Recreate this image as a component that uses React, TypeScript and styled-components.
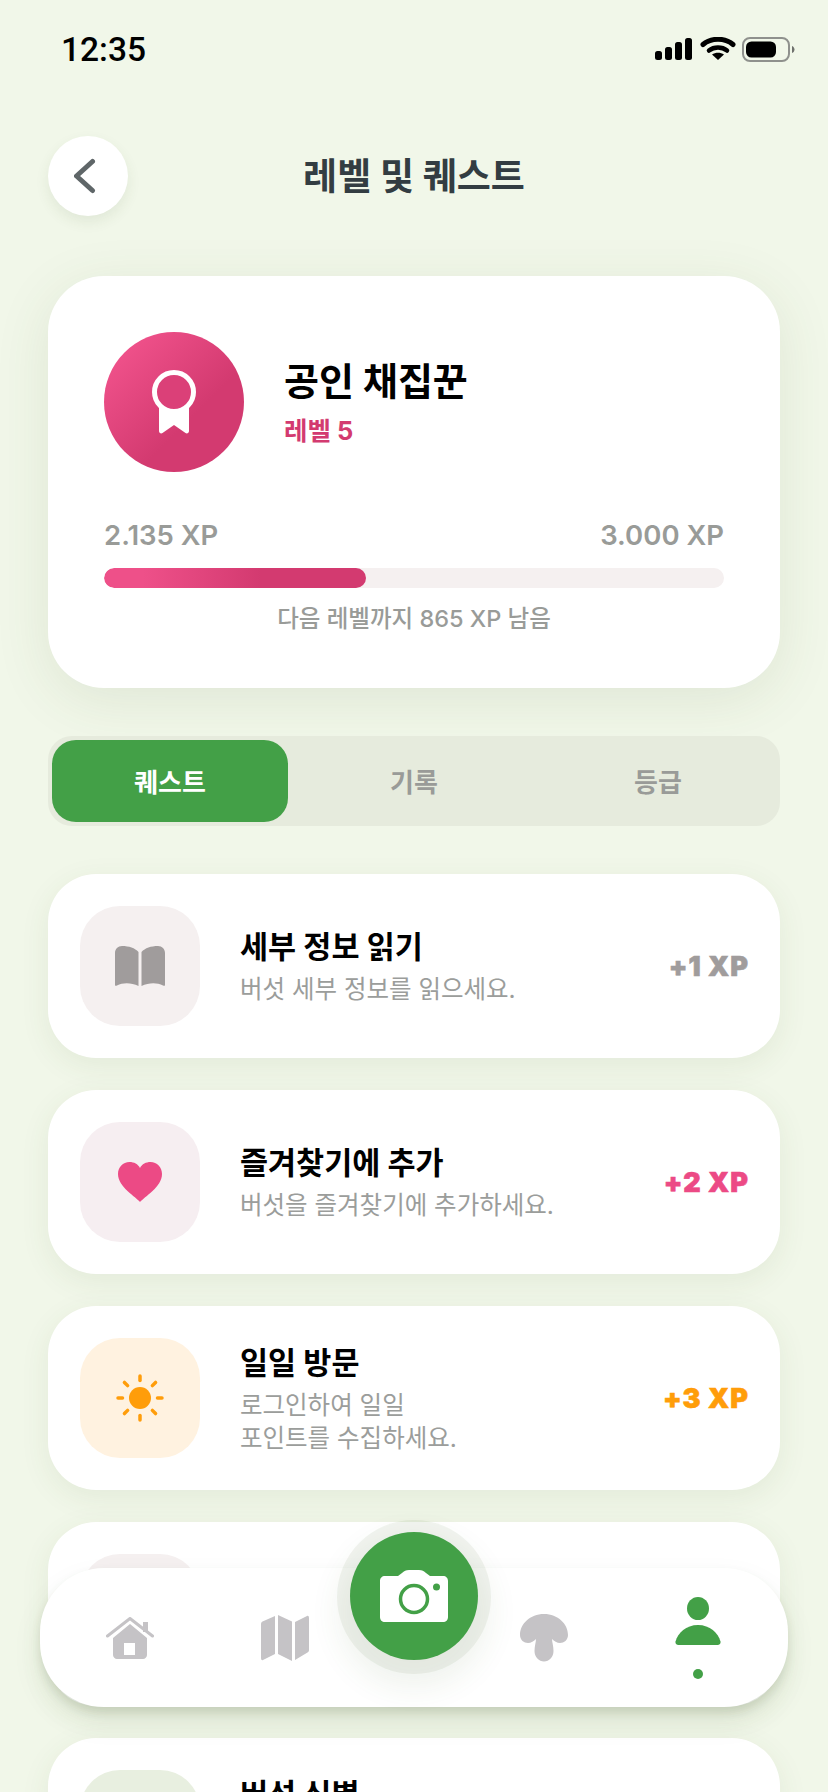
import * as React from "react";
import styled, { createGlobalStyle } from "styled-components";

const GlobalStyle = createGlobalStyle`
  html, body {
    margin: 0;
    padding: 0;
    background: #f1f7e9;
  }
  * { box-sizing: border-box; }
`;

const Screen = styled.div`
  position: relative;
  width: 828px;
  height: 1792px;
  overflow: hidden;
  background: #f1f7e9;
  font-family: "Inter", "Noto Sans CJK KR", sans-serif;
  color: #000;
`;

const StatusBar = styled.div`
  height: 136px;
  padding: 34px 32px 0 61px;
  display: flex;
  justify-content: space-between;
  align-items: flex-start;
`;

const Clock = styled.span`
  font-family: "Roboto", "Liberation Sans", sans-serif;
  font-size: 33.5px;
  line-height: 32px;
  font-weight: 500;
  margin-top: 0;
`;

const StatusIcons = styled.svg`
  display: block;
  margin-top: 3px;
`;

const Header = styled.header`
  position: relative;
  height: 80px;
  margin: 0 48px 60px;
  display: flex;
  align-items: center;
  justify-content: center;
`;

const BackButton = styled.button`
  position: absolute;
  left: 0;
  top: 0;
  width: 80px;
  height: 80px;
  border: 0;
  padding: 0;
  border-radius: 50%;
  background: #fff;
  display: flex;
  align-items: center;
  justify-content: center;
  box-shadow: 0 6px 14px rgba(70, 90, 40, 0.09);
`;

const Title = styled.h1`
  margin: -4px 0 0;
  font-size: 37px;
  font-weight: 700;
  color: #333d42;
`;

const LevelCard = styled.section`
  margin: 0 48px;
  height: 412px;
  padding: 56px 56px 0;
  background: #fff;
  border-radius: 56px;
  box-shadow: 0 12px 56px rgba(70, 90, 40, 0.1);
`;

const LevelHead = styled.div`
  display: flex;
  align-items: center;
  gap: 40px;
`;

const Badge = styled.div`
  width: 140px;
  height: 140px;
  border-radius: 50%;
  background: linear-gradient(135deg, #ee5089 15%, #d33a70 62%);
  display: flex;
  align-items: center;
  justify-content: center;
`;

const LevelName = styled.div`
  font-size: 38px;
  line-height: 44px;
  font-weight: 700;
  margin-top: 1px;
`;

const LevelNumber = styled.div`
  font-size: 25.5px;
  line-height: 30px;
  font-weight: 700;
  color: #d33a70;
  margin-top: 13px;
`;

const XpRow = styled.div`
  display: flex;
  justify-content: space-between;
  margin-top: 46px;
  font-size: 27.5px;
  line-height: 34px;
  font-weight: 600;
  color: #999b98;
`;

const Track = styled.div`
  height: 20px;
  margin-top: 16px;
  border-radius: 10px;
  background: #f5f0f0;
  overflow: hidden;
`;

const Fill = styled.div`
  height: 100%;
  border-radius: 10px;
  background: linear-gradient(90deg, #ee5089 15%, #d33a70 60%);
`;

const Remaining = styled.div`
  margin-top: 14px;
  text-align: center;
  font-size: 23.5px;
  line-height: 34px;
  font-weight: 500;
  color: #999b98;
`;

const Tabs = styled.nav`
  margin: 48px 48px 48px;
  height: 90px;
  display: grid;
  grid-template-columns: repeat(3, 1fr);
  background: #e6ebdd;
  border-radius: 24px;
`;

const Tab = styled.div<{ $active?: boolean }>`
  margin: 4px;
  padding-bottom: 2px;
  display: flex;
  align-items: center;
  justify-content: center;
  border-radius: 24px;
  font-size: 26px;
  font-weight: 700;
  color: ${(p) => (p.$active ? "#fff" : "#999b98")};
  background: ${(p) => (p.$active ? "#43a047" : "transparent")};
`;

const QuestList = styled.div`
  margin: 0 48px;
  display: flex;
  flex-direction: column;
  gap: 32px;
`;

const QuestCard = styled.article`
  height: 184px;
  flex: none;
  padding: 32px 31px 32px 32px;
  display: flex;
  align-items: flex-start;
  background: #fff;
  border-radius: 48px;
  box-shadow: 0 8px 30px rgba(70, 90, 40, 0.08);
`;

const QuestIcon = styled.div<{ $bg: string }>`
  width: 120px;
  height: 120px;
  flex: none;
  border-radius: 40px;
  background: ${(p) => p.$bg};
  display: flex;
  align-items: center;
  justify-content: center;
`;

const QuestText = styled.div`
  flex: 1;
  margin-left: 40px;
  height: 120px;
  display: flex;
  flex-direction: column;
  justify-content: center;
`;

const QuestTitle = styled.div`
  font-size: 30.5px;
  line-height: 42px;
  font-weight: 700;
  margin-bottom: 5px;
`;

const QuestDesc = styled.div`
  font-size: 24.5px;
  line-height: 33px;
  color: #9b9d9b;
`;

const QuestXp = styled.div<{ $color: string }>`
  align-self: center;
  font-size: 27px;
  font-weight: 900;
  letter-spacing: 1px;
  white-space: nowrap;
  -webkit-text-stroke: 0.6px ${(p) => p.$color};
  color: ${(p) => p.$color};
`;

const BottomNav = styled.nav`
  position: absolute;
  left: 40px;
  top: 1568px;
  width: 748px;
  height: 139px;
  padding-left: 12px;
  display: grid;
  grid-template-columns: 156px 154px 104px 156px 152px;
  align-items: center;
  background: #fff;
  border-radius: 64px;
  box-shadow: 0 6px 10px rgba(60, 85, 40, 0.13), 0 14px 30px rgba(60, 85, 40, 0.08);
`;

const NavItem = styled.div`
  display: flex;
  flex-direction: column;
  align-items: center;
  gap: 24px;
`;

const ActiveDot = styled.span`
  width: 10px;
  height: 10px;
  border-radius: 50%;
  background: #43a047;
`;

const CameraButton = styled.button`
  position: absolute;
  left: 310px;
  top: -36px;
  width: 128px;
  height: 128px;
  border: 0;
  padding: 0;
  border-radius: 50%;
  background: #43a047;
  display: flex;
  align-items: center;
  justify-content: center;
  box-shadow: 0 1px 0 13px rgba(70, 100, 40, 0.07), 0 16px 30px 12px rgba(70, 100, 40, 0.08);
`;

const BookIcon = () => (
  <svg width="50" height="40" viewBox="0 0 50 40">
    <path
      d="M23.5 6C20 2 14 0 7 0 3 0 0 3 0 7v32c0 1 1 1 2 .5C8 36.500 16 36.500 23.500 40Z"
      fill="#a09c9c"
    />
    <path
      d="M26.500 6C30 2 36 0 43 0c4 0 7 3 7 7v32c0 1-1 1-2 .5C42 36.500 34 36.500 26.500 40Z"
      fill="#a09c9c"
    />
  </svg>
);

const HeartIcon = () => (
  <svg width="44" height="40" viewBox="0 0 44 40">
    <path
      d="M22 40C18 35 0 25 0 12 0 5 5 0 11.500 0 16 0 20 2 22 6 24 2 28 0 32.500 0 39 0 44 5 44 12 44 25 26 35 22 40Z"
      fill="#ec4a85"
    />
  </svg>
);

const SunIcon = () => {
  const rays = [0, 45, 90, 135, 180, 225, 270, 315];
  return (
    <svg width="48" height="48" viewBox="-24 -24 48 48">
      <circle r="11" fill="#ff9d0a" />
      {rays.map((angle) => (
        <line
          key={angle}
          x1="0"
          y1="-17.500"
          x2="0"
          y2="-22"
          stroke="#ff9d0a"
          strokeWidth="3.500"
          strokeLinecap="round"
          transform={`rotate(${angle})`}
        />
      ))}
    </svg>
  );
};

type Quest = {
  id: string;
  title?: string;
  desc?: string[];
  xp?: string;
  color?: string;
  bg: string;
  icon?: React.ReactNode;
};

const QUESTS: Quest[] = [
  {
    id: "read",
    title: "세부 정보 읽기",
    desc: ["버섯 세부 정보를 읽으세요."],
    xp: "+1 XP",
    color: "#a09c9c",
    bg: "#f5f0f0",
    icon: <BookIcon />,
  },
  {
    id: "favorite",
    title: "즐겨찾기에 추가",
    desc: ["버섯을 즐겨찾기에 추가하세요."],
    xp: "+2 XP",
    color: "#ec4a85",
    bg: "#f6eef1",
    icon: <HeartIcon />,
  },
  {
    id: "daily",
    title: "일일 방문",
    desc: ["로그인하여 일일", "포인트를 수집하세요."],
    xp: "+3 XP",
    color: "#ff9d0a",
    bg: "#fff2e0",
    icon: <SunIcon />,
  },
  // sits behind the bottom nav, only the top of its icon box shows
  { id: "hidden", bg: "#f5f0f0" },
  {
    id: "identify",
    title: "버섯 식별",
    desc: ["새로운 버섯을", "식별하세요."],
    bg: "#e8efe0",
  },
];

const XP_PROGRESS = 42.2;

export default function App() {
  return (
    <Screen>
      <GlobalStyle />

      <StatusBar>
        <Clock>12:35</Clock>
        <StatusIcons width="141" height="28" viewBox="0 0 141 28">
          <rect x="0" y="14" width="7" height="9" rx="2.500" fill="#000" />
          <rect x="10" y="10" width="7" height="13" rx="2.500" fill="#000" />
          <rect x="20" y="5" width="7" height="18" rx="2.500" fill="#000" />
          <rect x="30" y="1" width="7" height="22" rx="2.500" fill="#000" />
          <path
            d="M48 7.500C56 .5 70 .5 78 7.500"
            fill="none"
            stroke="#000"
            strokeWidth="5"
            strokeLinecap="round"
          />
          <path
            d="M54 13.500C59 9.500 67 9.500 72 13.500"
            fill="none"
            stroke="#000"
            strokeWidth="4.500"
            strokeLinecap="round"
          />
          <path d="M63 23l-6-5.500c3.500-2.500 8.500-2.500 12 0Z" fill="#000" />
          <rect
            x="88"
            y="1"
            width="46"
            height="23"
            rx="7"
            fill="none"
            stroke="#8f918d"
            strokeWidth="2"
          />
          <rect x="91" y="4.500" width="30" height="16" rx="5.500" fill="#000" />
          <path d="M137 9v7c1.500-.5 2.500-2 2.500-3.500S138.500 9.500 137 9Z" fill="#6f716d" />
        </StatusIcons>
      </StatusBar>

      <Header>
        <BackButton aria-label="뒤로">
          <svg width="28" height="40" viewBox="0 0 28 40">
            <path
              d="M18.500 5.500 2.500 20l16 14.500"
              fill="none"
              stroke="#5f6668"
              strokeWidth="5"
              strokeLinecap="round"
              strokeLinejoin="round"
            />
          </svg>
        </BackButton>
        <Title>레벨 및 퀘스트</Title>
      </Header>

      <LevelCard>
        <LevelHead>
          <Badge>
            <svg width="44" height="64" viewBox="0 0 44 64">
              <path
                d="M7 36v25c0 2 2 3 3.500 2L22 55l11.500 8c1.500 1 3.500 0 3.500-2V36Z"
                fill="#fff"
              />
              <circle cx="22" cy="22" r="19.500" fill="#db4078" stroke="#fff" strokeWidth="5" />
            </svg>
          </Badge>
          <div>
            <LevelName>공인 채집꾼</LevelName>
            <LevelNumber>레벨 5</LevelNumber>
          </div>
        </LevelHead>
        <XpRow>
          <span>2.135 XP</span>
          <span>3.000 XP</span>
        </XpRow>
        <Track>
          <Fill style={{ width: `${XP_PROGRESS}%` }} />
        </Track>
        <Remaining>다음 레벨까지 865 XP 남음</Remaining>
      </LevelCard>

      <Tabs>
        <Tab $active>퀘스트</Tab>
        <Tab>기록</Tab>
        <Tab>등급</Tab>
      </Tabs>

      <QuestList>
        {QUESTS.map((quest) => (
          <QuestCard key={quest.id}>
            <QuestIcon $bg={quest.bg}>{quest.icon}</QuestIcon>
            <QuestText>
              {quest.title && <QuestTitle>{quest.title}</QuestTitle>}
              {quest.desc?.map((line) => (
                <QuestDesc key={line}>{line}</QuestDesc>
              ))}
            </QuestText>
            {quest.xp && <QuestXp $color={quest.color ?? "#a09c9c"}>{quest.xp}</QuestXp>}
          </QuestCard>
        ))}
      </QuestList>

      <BottomNav>
        <NavItem>
          <svg width="48" height="42" viewBox="0 0 48 42">
            <path
              d="M7 21 24 7l17 14v17c0 2-2 4-4 4H11c-2 0-4-2-4-4Zm11 5v12h11V26Z"
              fill="#c5c3c6"
              fillRule="evenodd"
            />
            <path
              d="M1.500 19 24 1.500 46.500 19"
              fill="none"
              stroke="#c5c3c6"
              strokeWidth="3"
              strokeLinecap="round"
              strokeLinejoin="round"
            />
            <rect x="37" y="5" width="5" height="10" fill="#c5c3c6" />
          </svg>
        </NavItem>
        <NavItem>
          <svg width="48" height="46" viewBox="0 0 48 46">
            <path d="M14 1v38l-12 6c-1 .5-2 0-2-2V9c0-1 .5-2 1.500-2.500Z" fill="#c5c3c6" />
            <path d="M17 0l14 6.500V46l-14-7Z" fill="#c5c3c6" />
            <path d="M34 7l12-6c1-.5 2 0 2 2v32c0 1-.5 2-1.500 2.500L34 45Z" fill="#c5c3c6" />
          </svg>
        </NavItem>
        <CameraButton aria-label="카메라">
          <svg width="68" height="52" viewBox="0 0 68 52">
            <path
              d="M5 6h13l4-3c2-2 4-3 7-3h10c3 0 5 1 7 3l4 3h13c3 0 5 2 5 5v36c0 3-2 5-5 5H5c-3 0-5-2-5-5V11c0-3 2-5 5-5Z"
              fill="#fff"
            />
            <circle cx="34" cy="29" r="13.500" fill="#fff" stroke="#43a047" strokeWidth="3.500" />
            <circle cx="56.500" cy="17" r="3.500" fill="#43a047" />
          </svg>
        </CameraButton>
        <span />
        <NavItem>
          <svg width="48" height="48" viewBox="0 0 48 48">
            <path
              d="M24 0C10 0 0 10 0 21c0 5 4 8 8 8 3 0 6-2 8-4 0 3-1.500 7-1.500 12 0 6 4.500 10.500 9.500 10.500s9.500-4.500 9.500-10.500c0-5-1.500-9-1.500-12 2 2 5 4 8 4 4 0 8-3 8-8C48 10 38 0 24 0Z"
              fill="#c5c3c6"
            />
          </svg>
        </NavItem>
        <NavItem>
          <svg width="46" height="48" viewBox="0 0 46 48">
            <ellipse cx="23" cy="11.500" rx="11" ry="11.500" fill="#43a047" />
            <path
              d="M23 28c12 0 20 8 22.500 16.500.5 2-1 3.500-3 3.500H3.500c-2 0-3.500-1.500-3-3.500C3 36 11 28 23 28Z"
              fill="#43a047"
            />
          </svg>
          <ActiveDot />
        </NavItem>
      </BottomNav>
    </Screen>
  );
}
